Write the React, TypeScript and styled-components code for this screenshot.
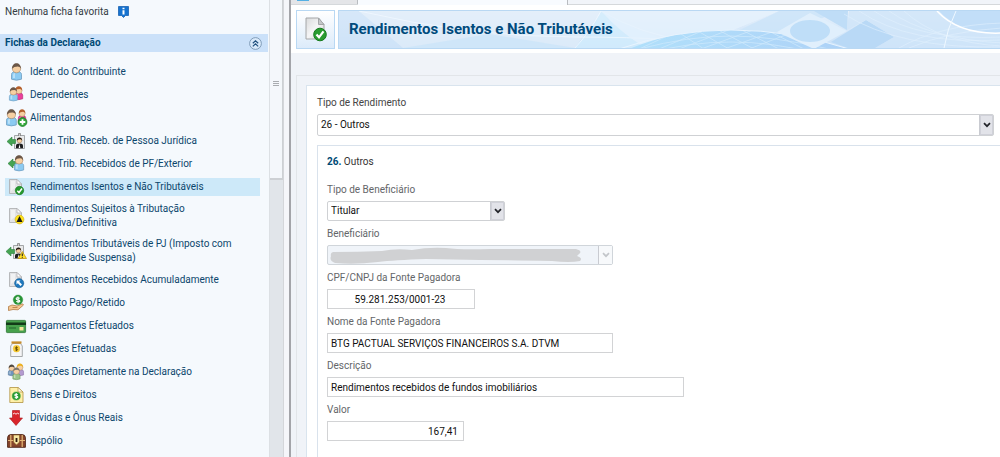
import React from "react";
import styled, { createGlobalStyle } from "styled-components";

const GlobalStyle = createGlobalStyle`
  * { box-sizing: border-box; }
  body {
    margin: 0;
    background: #f0f3f8;
    font-family: Roboto, "Liberation Sans", sans-serif;
    font-size: 10px;
    line-height: 14px;
    color: #333;
  }
`;

/* ---------- shell ---------- */

const Shell = styled.div`
  display: flex;
  height: 100vh;
  overflow: hidden;
`;

const Sidebar = styled.aside`
  flex: 0 0 269px;
  background: #f5f9fd;
  overflow: hidden;
`;

const ScrollTrack = styled.div`
  flex: 0 0 14px;
  background: #e1e5ea;
  border-left: 1px solid #dce0e4;
`;

const ScrollThumb = styled.div`
  display: flex;
  flex-direction: column;
  align-items: center;
  gap: 1px;
  height: 180px;
  padding-top: 81px;
  background: #f4f7fb;
  border: 1px solid #cdd0d4;
  border-width: 0 1px 2px 0;
`;

const Grip = styled.span`
  width: 6px;
  height: 1px;
  background: #a9acb0;
`;

const Splitter = styled.div`
  flex: 0 0 8px;
  background: #f5f6fa;
  border-left: 1px solid #d4d6da;
  border-right: 2px solid #a3a4a9;
`;

/* ---------- sidebar ---------- */

const Favorites = styled.p`
  display: flex;
  align-items: center;
  gap: 9px;
  margin: 0;
  height: 34px;
  padding: 0 0 10px 5px;
  color: #333b42;
`;

const GroupHeader = styled.h2`
  display: flex;
  align-items: center;
  justify-content: space-between;
  margin: 0 1px 11px 0;
  height: 18px;
  padding: 0 6px 0 5px;
  background: #cbe1f9;
  color: #004a75;
  font-size: 10px;
  line-height: 18px;
  font-weight: 700;
`;

const CollapseButton = styled.button`
  display: flex;
  padding: 0;
  border: 0;
  background: none;
`;

const MenuList = styled.ul`
  display: flex;
  flex-direction: column;
  gap: 5px;
  margin: 0;
  padding: 0 9px 0 5px;
  list-style: none;
`;

const MenuLink = styled.a<{ $active?: boolean; $tall?: boolean }>`
  display: flex;
  align-items: center;
  gap: 3px;
  height: ${(p) => (p.$tall ? 30 : 18)}px;
  background: ${(p) => (p.$active ? "#cde9f9" : "transparent")};
  color: #0c466c;
  text-decoration: none;
`;

const IconSlot = styled.span`
  display: flex;
  flex: 0 0 22px;
  justify-content: center;
`;

const Svg = styled.svg`
  display: block;
  overflow: visible;
`;

/* ---------- main ---------- */

const Main = styled.main`
  flex: 1;
  min-width: 0;
  background: #f0f3f8;
`;

const TabStrip = styled.div`
  display: flex;
  height: 5px;
  background: #f1f4f9;
  border-bottom: 1px solid #d5d8db;
`;

const Tab = styled.div<{ $active?: boolean; $width: number }>`
  width: ${(p) => p.$width}px;
  height: ${(p) => (p.$active ? 5 : 4)}px;
  padding-left: 6px;
  background: ${(p) => (p.$active ? "#f8fbff" : "#e4e5e8")};
  border-right: 1px solid #b9bcc0;
`;

const TabMark = styled.span`
  display: block;
  width: 12px;
  height: 1px;
  background: #55b0e4;
`;

const PageHeader = styled.header`
  display: flex;
  gap: 3px;
  padding: 5px 0 4px 5px;
  background: #fff;
`;

const HeaderIcon = styled.div`
  display: flex;
  align-items: center;
  justify-content: center;
  flex: 0 0 39px;
  height: 39px;
  border: 1px solid #b9d8f3;
  background: linear-gradient(#ffffff, #dcebfa);
`;

const Banner = styled.div`
  position: relative;
  flex: 1;
  height: 39px;
  padding-left: 10px;
  border: 1px solid #b9d8f3;
  border-right: 0;
  background: linear-gradient(#e6f0fb, #c9e1f8);
  overflow: hidden;
`;

const BannerArt = styled.svg`
  position: absolute;
  top: 0;
  left: 0;
  width: 100%;
  height: 100%;
`;

const Title = styled.h1`
  position: relative;
  margin: 0;
  color: #004a7c;
  font-size: 15px;
  line-height: 37px;
  font-weight: 700;
`;

const Outer = styled.section`
  margin: 22px 0 0 5px;
  padding: 9px 0 0 9px;
  border: 1px solid #e2e5e9;
  border-width: 1px 0 0 1px;
`;

const Panel = styled.form`
  padding: 10px 6px 0 10px;
  min-height: 400px;
  border: 1px solid #d9e4ee;
  border-width: 1px 0 0 1px;
  background: #fff;
`;

const SubPanel = styled.div`
  display: flex;
  flex-direction: column;
  align-items: flex-start;
  gap: 6px;
  margin: 9px -6px 0 0;
  min-height: 330px;
  padding: 9px 9px 0;
  border: 1px solid #d9e2ec;
  border-width: 1px 0 0 1px;
`;

const SubTitle = styled.h3`
  margin: 0 0 8px;
  font-size: 10px;
  line-height: 14px;
  font-weight: 400;
  color: #333;

  b {
    color: #004a75;
  }
`;

const Field = styled.div<{ $width?: number }>`
  display: flex;
  flex-direction: column;
  gap: 4px;
  width: ${(p) => (p.$width ? `${p.$width}px` : "auto")};
  max-width: 100%;
`;

const Label = styled.label<{ $dark?: boolean }>`
  color: ${(p) => (p.$dark ? "#444" : "#646669")};
  white-space: nowrap;
`;

const TextInput = styled.input<{ $align?: string }>`
  width: 100%;
  height: 20px;
  padding: 0 5px 0 3px;
  border: 1px solid #d2d3d5;
  border-radius: 0;
  background: #fff;
  color: #111;
  font: inherit;
  text-align: ${(p) => p.$align ?? "left"};
`;

const SelectBox = styled.div`
  position: relative;
`;

const Select = styled.select<{ $tall?: boolean }>`
  display: block;
  width: 100%;
  height: ${(p) => (p.$tall ? 22 : 20)}px;
  padding: 0 20px 0 3px;
  appearance: none;
  border: 1px solid #cfd1d4;
  border-radius: 2px;
  background: #fff;
  color: #111;
  font: inherit;
  opacity: 1;

  &:disabled {
    border-color: #d0d5da;
    background: #f0f4f9;
  }
`;

const Arrow = styled.span<{ $muted?: boolean }>`
  position: absolute;
  top: 1px;
  right: 1px;
  bottom: 1px;
  width: 14px;
  display: flex;
  align-items: center;
  justify-content: center;
  border-left: 1px solid #c9cbd1;
  background: ${(p) => (p.$muted ? "#f7f9fb" : "#e2e3e9")};
  box-shadow: ${(p) => (p.$muted ? "none" : "inset 0 0 0 1px #d0d1d9")};
  pointer-events: none;
`;

const Smear = styled.svg`
  position: absolute;
  top: 2px;
  left: 3px;
  pointer-events: none;
`;

/* ---------- icons ---------- */

const Head = ({ x, y, r = 3, hair = "#6a4026" }: { x: number; y: number; r?: number; hair?: string }) => (
  <g>
    <circle cx={x} cy={y} r={r} fill="#f6cfa2" stroke="#9b724c" strokeWidth=".5" />
    <path
      d={`M${x - r - 0.2} ${y + 0.2}C${x - r - 0.6} ${y - r * 1.75} ${x + r + 0.6} ${y - r * 1.75} ${x + r + 0.2} ${y + 0.2}Q${x + r * 0.8} ${y - r * 0.5} ${x + r * 0.3} ${y - r * 0.5}L${x - r * 0.5} ${y - r * 0.4}Z`}
      fill={hair}
    />
  </g>
);

const Person = ({ x = 0, y = 0, s = 1, body = "#8ccbf2", edge = "#6d9cc0", hair = "#6b5748" }) => (
  <g transform={`translate(${x} ${y}) scale(${s})`}>
    <path d="M.5 15.200V10.500Q.5 7.500 5.500 7.500T10.500 10.500V15.200Q5.500 17.200 .5 15.200Z" fill={body} stroke={edge} strokeWidth=".8" />
    <path d="M2 14V11Q2 9 4 9V14Z" fill="#fff" opacity=".4" />
    <Head x={5.5} y={4.6} r={4.2} hair={hair} />
  </g>
);

const Sheet = ({ fill = "#e3e4e6", edge = "#a9abad" }) => (
  <g>
    <path d="M1.500 .5H9L13.500 5V14.500H1.500Z" fill={fill} stroke={edge} strokeWidth=".8" />
    <path d="M9 .5V5H13.500Z" fill="#fff" stroke={edge} strokeWidth=".7" />
    <path d="M3 2H7V9L3 12Z" fill="#fff" opacity=".5" />
  </g>
);

const LeftArrow = ({ x = 0, y = 0 }) => (
  <path
    transform={`translate(${x} ${y})`}
    d="M0 4.500L5 0V2.500H8.500V6.500H5V9Z"
    fill="#45a352"
    stroke="#2b7f3d"
    strokeWidth=".6"
  />
);

const Badge = () => (
  <g>
    <path d="M7.500 2.500H17.500V15.500H7.500Z" fill="#e9eaeb" stroke="#8f9294" strokeWidth=".8" />
    <path d="M11.500 3V.5H13.500V3" fill="#ccc" stroke="#777" strokeWidth=".7" />
    <path d="M9 15.200V12.500Q9 10.500 12.500 10.500T16 12.500V15.200Z" fill="#1d1d1f" />
    <path d="M12.500 11L11.700 15H13.300Z" fill="#fff" />
    <Head x={12.5} y={7.5} r={2.4} hair="#1f1711" />
  </g>
);

const Check = () => (
  <g>
    <circle cx="11.500" cy="11.500" r="4.200" fill="#25992e" stroke="#14751d" strokeWidth=".6" />
    <path d="M9.300 11.700L11 13.500L14 9.500" fill="none" stroke="#fff" strokeWidth="1.500" />
  </g>
);

const Dollar = ({ x, y, c, r, text = "#fff" }: { x: number; y: number; c: string; r: number; text?: string }) => (
  <g>
    <circle cx={x} cy={y} r={r} fill={c} stroke={c} strokeWidth=".4" />
    <path
      transform={`translate(${x} ${y}) scale(${r / 4.5})`}
      d="M1.700-1.500Q-1.700-2.600-1.700-.9Q-1.500 0 0 0Q1.700.3 1.700 1.200Q1.500 2.600-1.700 1.600M0-3.200V3.200"
      fill="none"
      stroke={text}
      strokeWidth="1.100"
    />
  </g>
);

const icons: Record<string, { w: number; h: number; art: React.ReactNode }> = {
  person: { w: 11, h: 17, art: <Person /> },
  couple: {
    w: 14,
    h: 16,
    art: (
      <g>
        <Person x={5.5} y={0} s={0.78} body="#ea3f9b" edge="#b52273" hair="#b5602d" />
        <Person x={0} y={1} s={0.8} />
      </g>
    ),
  },
  add: {
    w: 21,
    h: 17,
    art: (
      <g>
        <Person x={12} y={0} s={0.74} body="#ea3f9b" edge="#b52273" hair="#b5602d" />
        <Person x={0} y={0} s={0.98} />
        <circle cx="16.500" cy="12" r="4.400" fill="#32a83b" stroke="#13781d" strokeWidth=".8" />
        <path d="M16.500 9.200V14.800M13.700 12H19.300" stroke="#fff" strokeWidth="1.800" />
      </g>
    ),
  },
  badge: { w: 18, h: 16, art: <g><Badge /><LeftArrow x={0} y={4} /></g> },
  fromPerson: { w: 17, h: 16, art: <g><LeftArrow x={0} y={3} /><Person x={6} s={0.92} /></g> },
  check: { w: 16, h: 16, art: <g><Sheet /><Check /></g> },
  exclusive: {
    w: 16,
    h: 16,
    art: (
      <g>
        <Sheet />
        <circle cx="11.500" cy="11.500" r="4.400" fill="#ffe21a" stroke="#cda90b" strokeWidth=".6" />
        <path d="M11.500 8L14.500 14H8.500Z" fill="#161616" />
      </g>
    ),
  },
  suspended: {
    w: 20,
    h: 16,
    art: (
      <g>
        <Badge />
        <LeftArrow x={0} y={4} />
        <path d="M16.300 8.500L20.500 15.500H12Z" fill="#ffdf26" stroke="#b98d0a" strokeWidth=".7" />
        <path d="M16.300 10.500V13M16.300 13.800V14.800" stroke="#222" strokeWidth="1.100" />
      </g>
    ),
  },
  accumulated: {
    w: 16,
    h: 16,
    art: (
      <g>
        <Sheet />
        <circle cx="11.200" cy="11.200" r="4.600" fill="#1e78bd" stroke="#115586" strokeWidth=".5" />
        <path d="M8.500 8.500H12.500L11.200 9.800L14 12.500L12.500 14L9.800 11.200L8.500 12.500Z" fill="#fff" />
      </g>
    ),
  },
  tax: {
    w: 16,
    h: 16,
    art: (
      <g>
        <path d="M.5 11.500L4 10L9 11L14.500 8.800L15.500 10L10 14.800L5 14.500L.5 15.500Z" fill="#f4c791" stroke="#a86d35" strokeWidth=".7" />
        <path d="M4.500 12.500H9.500" stroke="#a86d35" strokeWidth=".7" />
        <Dollar x={10} y={4.8} r={4.8} c="#279335" />
      </g>
    ),
  },
  card: {
    w: 20,
    h: 13,
    art: (
      <g>
        <rect x=".4" y=".4" width="19.200" height="12.200" rx=".8" fill="#47a14c" stroke="#2b7431" strokeWidth=".8" />
        <rect y="2.500" width="20" height="2.500" fill="#123b18" />
        <path d="M3 8H10" stroke="#20662a" strokeWidth="1" />
        <rect x="13.500" y="7" width="4" height="3.500" fill="#f2e69b" />
      </g>
    ),
  },
  jar: {
    w: 13,
    h: 16,
    art: (
      <g>
        <path d="M2.500 2.500L.7 5V15.500H12.300V5L10.500 2.500Z" fill="#f5f5f6" stroke="#929497" strokeWidth=".8" />
        <rect x="1.500" y=".4" width="10" height="2.300" fill="#c78c2b" />
        <Dollar x={6.5} y={7.7} r={3.4} c="#f5c833" text="#614900" />
      </g>
    ),
  },
  group: {
    w: 16,
    h: 16,
    art: (
      <g>
        <Person x={0} y={1} s={0.66} body="#6d94bd" edge="#54789b" hair="#504840" />
        <Person x={8} y={0} s={0.72} body="#b39bd0" edge="#8b74a8" hair="#edb11e" />
        <Person x={4.5} y={4} s={0.72} body="#9bc58b" edge="#6d975f" hair="#7b756d" />
      </g>
    ),
  },
  goods: {
    w: 15,
    h: 16,
    art: (
      <g>
        <path d="M.8 .5H9L14 5V15.500H.8Z" fill="#fff0a8" stroke="#b19342" strokeWidth=".8" />
        <path d="M9 .5V5H14Z" fill="#fffbe0" stroke="#b19342" strokeWidth=".7" />
        <Dollar x={7.3} y={9} r={4.1} c="#2b9c35" />
      </g>
    ),
  },
  debt: {
    w: 14,
    h: 16,
    art: (
      <g>
        <path d="M3.500 .5H10.500V8H13.500L7 15.500L.5 8H3.500Z" fill="#d9252b" stroke="#a81419" strokeWidth=".6" />
        <path d="M4 4L5.500 3.200L7 4.200L8.500 3.200L10 4" fill="none" stroke="#fff" strokeWidth=".9" />
      </g>
    ),
  },
  chest: {
    w: 19,
    h: 14,
    art: (
      <g>
        <path d="M.6 13.300V3.500Q.8 .6 4 .6H15Q18.200 .6 18.400 3.500V13.300Z" fill="#86452c" stroke="#4c2214" strokeWidth=".9" />
        <path d="M1 6.500H18M3.800 1V13M15.200 1V13" stroke="#e5b978" strokeWidth="1.200" />
        <path d="M6.500 1H12.500V8L9.500 11L6.500 8Z" fill="#f7e5a2" stroke="#8b5f1f" strokeWidth=".6" />
        <path d="M9.500 4V8" stroke="#2d1a0e" strokeWidth="1.800" />
      </g>
    ),
  },
};

const Icon = ({ name }: { name: string }) => {
  const { w, h, art } = icons[name];
  return (
    <Svg width={w} height={h} viewBox={`0 0 ${w} ${h}`} aria-hidden="true">
      {art}
    </Svg>
  );
};

const Chevron = ({ color = "#22242a" }) => (
  <Svg width="8" height="6" viewBox="0 0 8 6" aria-hidden="true">
    <path d="M1 1.200L4 4.200L7 1.200" fill="none" stroke={color} strokeWidth="1.700" />
  </Svg>
);

const menu: { icon: string; text: string[]; active?: boolean }[] = [
  { icon: "person", text: ["Ident. do Contribuinte"] },
  { icon: "couple", text: ["Dependentes"] },
  { icon: "add", text: ["Alimentandos"] },
  { icon: "badge", text: ["Rend. Trib. Receb. de Pessoa Jurídica"] },
  { icon: "fromPerson", text: ["Rend. Trib. Recebidos de PF/Exterior"] },
  { icon: "check", text: ["Rendimentos Isentos e Não Tributáveis"], active: true },
  { icon: "exclusive", text: ["Rendimentos Sujeitos à Tributação", "Exclusiva/Definitiva"] },
  { icon: "suspended", text: ["Rendimentos Tributáveis de PJ (Imposto com", "Exigibilidade Suspensa)"] },
  { icon: "accumulated", text: ["Rendimentos Recebidos Acumuladamente"] },
  { icon: "tax", text: ["Imposto Pago/Retido"] },
  { icon: "card", text: ["Pagamentos Efetuados"] },
  { icon: "jar", text: ["Doações Efetuadas"] },
  { icon: "group", text: ["Doações Diretamente na Declaração"] },
  { icon: "goods", text: ["Bens e Direitos"] },
  { icon: "debt", text: ["Dívidas e Ônus Reais"] },
  { icon: "chest", text: ["Espólio"] },
];

const BannerDrawing = () => (
  <BannerArt viewBox="0 0 663 37" preserveAspectRatio="xMinYMid slice" aria-hidden="true">
    <defs>
      <clipPath id="dome">
        <path d="M290 38Q335 19 392 19Q452 19 510 38Z" />
      </clipPath>
      <linearGradient id="fade" x1="0" x2="1">
        <stop offset="0" stopColor="#b0e0fb" />
        <stop offset="1" stopColor="#aed2f7" />
      </linearGradient>
    </defs>
    <path d="M0 0H20L64 37H0Z" fill="#d0e4f8" opacity=".7" />
    <path d="M20 0H262L236 37H64Z" fill="#e2eefa" opacity=".7" />
    <path d="M64 37L150 23L236 37Z" fill="#cce5f9" opacity=".8" />
    <path d="M236 37Q262 5 262 0Q300 22 350 37Z" fill="#d2ecfc" opacity=".8" />
    <path d="M236 37Q250 22 262 0M262 0Q300 23 350 30M20 0Q130 26 236 26T420 37" fill="none" stroke="#f0f8ff" strokeWidth=".8" />
    <path d="M262 0H440L392 20Q330 20 302 34Q280 20 262 0Z" fill="#e5f1fc" opacity=".8" />
    <path d="M440 0H505L440 21L400 28H382Z" fill="#cae3f9" opacity=".8" />
    <path d="M290 38Q335 19 392 19Q452 19 510 38Z" fill="url(#fade)" />
    <g clipPath="url(#dome)" stroke="#d0e9fc" strokeWidth=".7" fill="none">
      <path d="M300 38L350 15M320 38L375 15M340 38L400 15M362 38L425 15M385 38L450 15M410 38L470 15" />
      <path d="M330 15L365 38M350 15L390 38M372 15L415 38M395 15L440 38M420 15L465 38" />
      <path d="M300 38Q350 25 392 25T490 38M310 42Q350 31 392 31T475 42" />
    </g>
    <path d="M280 38Q335 19 392 19Q452 19 510 38" fill="none" stroke="#e8f4fe" strokeWidth="1" />
    <path d="M471 2L508 20L475 38L438 21Z" fill="#e0effc" />
    <ellipse cx="471" cy="20" rx="20" ry="11" fill="#bfdef8" />
    <path d="M475 0H509L508 19Z" fill="#bfddf7" />
    <path d="M527 9L555 26L536 37H509L492 31Z" fill="#b9d9f6" />
    <path d="M510 0H600Q622 24 663 22V37H536L555 26L527 9L508 19Z" fill="#cfe5f9" opacity=".8" />
    <path d="M600 0H663V22Q622 24 600 0Z" fill="#c2def8" />
    <g fill="none" stroke="#e1f0fd" strokeWidth=".6">
      <path d="M520 0Q570 34 663 29M535 0Q580 30 663 26M550 0Q590 28 663 32M565 0Q600 32 663 35M505 3Q560 38 663 36" />
      <path d="M560 37Q600 14 663 12M570 37Q610 20 663 17" />
    </g>
    <path d="M598 0Q620 24 663 22" fill="none" stroke="#fff" strokeWidth="1.500" />
    <path d="M617 0Q608 18 605 37" fill="none" stroke="#eff8ff" strokeWidth="1" />
  </BannerArt>
);

export default function App() {
  return (
    <>
      <GlobalStyle />
      <Shell>
        <Sidebar>
          <Favorites>
            Nenhuma ficha favorita
            <Svg width="11" height="12" viewBox="0 0 11 12" aria-hidden="true">
              <path d="M.5 .5H10.500V9.500H7.500L5.500 11.500L3.500 9.500H.5Z" fill="#1673cf" stroke="#0a56aa" strokeWidth=".7" />
              <path d="M5.500 1.800V3.200M5.500 4.300V8.500" stroke="#fff" strokeWidth="2" />
            </Svg>
          </Favorites>
          <GroupHeader>
            Fichas da Declaração
            <CollapseButton type="button" aria-label="Recolher">
              <Svg width="13" height="13" viewBox="0 0 13 13" aria-hidden="true">
                <circle cx="6.500" cy="6.500" r="5.900" fill="#d8e9fa" stroke="#7895b2" strokeWidth=".9" />
                <path d="M3.800 6.200L6.500 3.700L9.200 6.200M3.800 9.400L6.500 6.900L9.200 9.400" fill="none" stroke="#1f4f7d" strokeWidth="1.200" />
              </Svg>
            </CollapseButton>
          </GroupHeader>
          <nav>
            <MenuList>
              {menu.map((item) => (
                <li key={item.icon}>
                  <MenuLink href="#" $active={item.active} $tall={item.text.length > 1}>
                    <IconSlot>
                      <Icon name={item.icon} />
                    </IconSlot>
                    <span>
                      {item.text.map((line, i) => (
                        <React.Fragment key={line}>
                          {i > 0 && <br />}
                          {line}
                        </React.Fragment>
                      ))}
                    </span>
                  </MenuLink>
                </li>
              ))}
            </MenuList>
          </nav>
        </Sidebar>
        <ScrollTrack>
          <ScrollThumb>
            <Grip />
            <Grip />
            <Grip />
          </ScrollThumb>
        </ScrollTrack>
        <Splitter />
        <Main>
          <TabStrip>
            <Tab $width={67}>
              <TabMark />
            </Tab>
            <Tab $width={210} $active />
          </TabStrip>
          <PageHeader>
            <HeaderIcon>
              <Svg width="22" height="25" viewBox="0 0 22 25" aria-hidden="true">
                <defs>
                  <linearGradient id="paper" x2="1" y2="1">
                    <stop offset="0" stopColor="#d9dadb" />
                    <stop offset=".5" stopColor="#f5f5f6" />
                    <stop offset="1" stopColor="#cfd0d2" />
                  </linearGradient>
                </defs>
                <path d="M1 1H13.500L19 7.500V22H1Z" fill="url(#paper)" stroke="#a4a6a8" />
                <path d="M13.500 1V7.500H19Z" fill="#c6c8ca" stroke="#a4a6a8" />
                <circle cx="15" cy="17.500" r="6.300" fill="#299c30" stroke="#167a1e" />
                <path d="M11.500 17.500L14 20.300L18.500 14.300" fill="none" stroke="#fff" strokeWidth="2.200" />
              </Svg>
            </HeaderIcon>
            <Banner>
              <BannerDrawing />
              <Title>Rendimentos Isentos e Não Tributáveis</Title>
            </Banner>
          </PageHeader>
          <Outer>
            <Panel>
              <Field>
                <Label htmlFor="rendimento" $dark>Tipo de Rendimento</Label>
                <SelectBox>
                  <Select id="rendimento" $tall>
                    <option>26 - Outros</option>
                  </Select>
                  <Arrow><Chevron /></Arrow>
                </SelectBox>
              </Field>
              <SubPanel>
                <SubTitle>
                  <b>26.</b> Outros
                </SubTitle>
                <Field $width={178}>
                  <Label htmlFor="tipo">Tipo de Beneficiário</Label>
                  <SelectBox>
                    <Select id="tipo">
                      <option>Titular</option>
                    </Select>
                    <Arrow><Chevron /></Arrow>
                  </SelectBox>
                </Field>
                <Field $width={286}>
                  <Label htmlFor="beneficiario">Beneficiário</Label>
                  <SelectBox>
                    <Select id="beneficiario" disabled />
                    <Smear width="254" height="17" viewBox="0 0 254 17" aria-hidden="true">
                      <path
                        d="M3 5Q28 5 52 4Q66 1 82 3Q98 0 116 1Q130 3 160 2L246 2Q253 4 249 7L247 9Q253 11 250 14Q240 16 222 14Q180 13 150 13L96 12Q64 13 48 15Q24 18 5 16Q-1 14 1 9Q0 6 3 5Z"
                        fill="#d0d1d3"
                      />
                    </Smear>
                    <Arrow $muted><Chevron color="#c3c6ca" /></Arrow>
                  </SelectBox>
                </Field>
                <Field $width={148}>
                  <Label htmlFor="cnpj">CPF/CNPJ da Fonte Pagadora</Label>
                  <TextInput id="cnpj" defaultValue="59.281.253/0001-23" $align="center" />
                </Field>
                <Field $width={286}>
                  <Label htmlFor="nome">Nome da Fonte Pagadora</Label>
                  <TextInput id="nome" defaultValue="BTG PACTUAL SERVIÇOS FINANCEIROS S.A. DTVM" />
                </Field>
                <Field $width={357}>
                  <Label htmlFor="descricao">Descrição</Label>
                  <TextInput id="descricao" defaultValue="Rendimentos recebidos de fundos imobiliários" />
                </Field>
                <Field $width={137}>
                  <Label htmlFor="valor">Valor</Label>
                  <TextInput id="valor" defaultValue="167,41" $align="right" />
                </Field>
              </SubPanel>
            </Panel>
          </Outer>
        </Main>
      </Shell>
    </>
  );
}
